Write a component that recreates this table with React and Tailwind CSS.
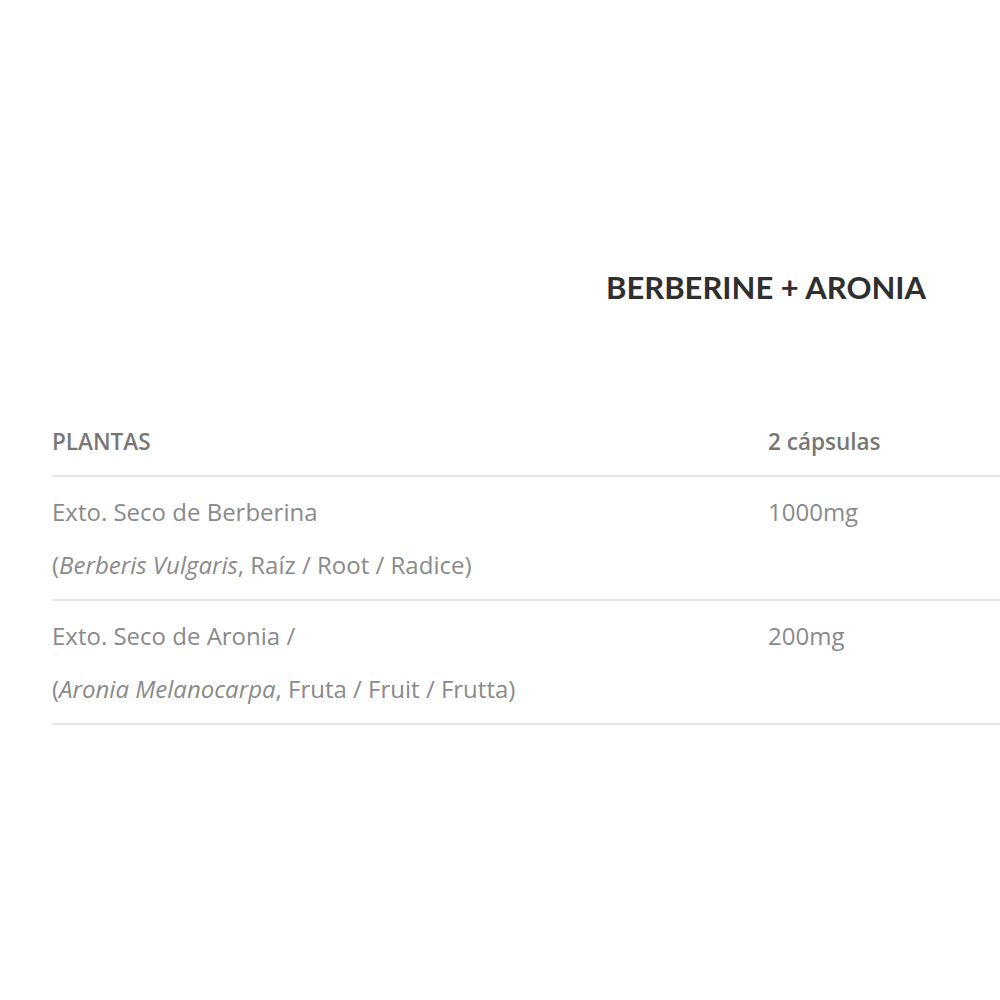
export default function App() {
  return (
    <div className="w-[1000px] h-[1000px] bg-white overflow-hidden font-['Open_Sans',sans-serif]">
      <div className="pt-[265px] pl-[606px]">
        <h1 className="text-[31px] leading-[44px] font-bold text-[#2f2f2f] whitespace-nowrap font-['Lato',sans-serif]">BERBERINE + ARONIA</h1>
      </div>
      <div className="mt-[116px] ml-[52px] w-[1000px] text-[24px] text-[#8a8a8a]">
        <div className="flex h-[52px] items-start border-b-2 border-[#e6e6e6] text-[22.5px]">
          <div className="w-[716px] font-semibold text-[#777]">PLANTAS</div>
          <div className="font-semibold text-[#777]">2 cápsulas</div>
        </div>
        <div className="flex h-[124px] pt-[24px] border-b-2 border-[#e6e6e6] leading-[53px]">
          <div className="w-[716px] -mt-[16px]">
            <div>Exto. Seco de Berberina</div>
            <div>(<i>Berberis Vulgaris</i>, Raíz / Root / Radice)</div>
          </div>
          <div className="-mt-[16px]">1000mg</div>
        </div>
        <div className="flex h-[124px] pt-[24px] border-b-2 border-[#e6e6e6] leading-[53px]">
          <div className="w-[716px] -mt-[16px]">
            <div>Exto. Seco de Aronia /</div>
            <div>(<i>Aronia Melanocarpa</i>, Fruta / Fruit / Frutta)</div>
          </div>
          <div className="-mt-[16px]">200mg</div>
        </div>
      </div>
    </div>
  );
}
